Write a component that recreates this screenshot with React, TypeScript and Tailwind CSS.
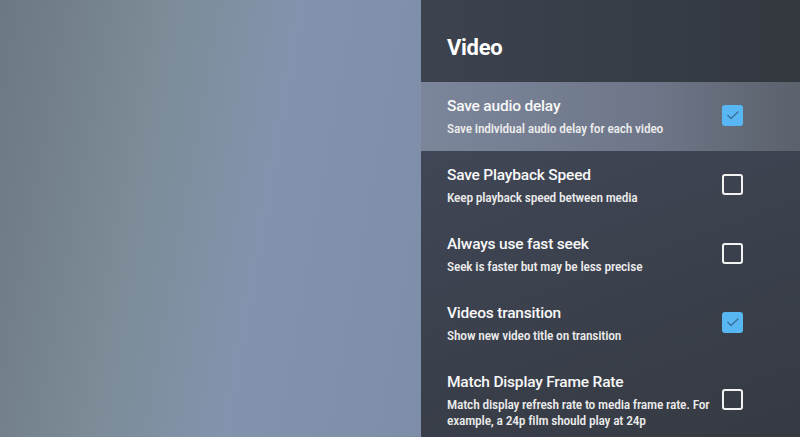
import React from "react";

type Item = { title: string; sub: string[]; checked: boolean; active?: boolean };

const items: Item[] = [
  { title: "Save audio delay", sub: ["Save individual audio delay for each video"], checked: true, active: true },
  { title: "Save Playback Speed", sub: ["Keep playback speed between media"], checked: false },
  { title: "Always use fast seek", sub: ["Seek is faster but may be less precise"], checked: false },
  { title: "Videos transition", sub: ["Show new video title on transition"], checked: true },
  {
    title: "Match Display Frame Rate",
    sub: ["Match display refresh rate to media frame rate. For", "example, a 24p film should play at 24p"],
    checked: false,
  },
];

function Box({ checked }: { checked: boolean }) {
  if (checked) {
    return (
      <div className="w-[21px] h-[21px] rounded-[3px] bg-[#58b6f2] flex items-center justify-center">
        <svg width="14" height="10" viewBox="0 0 14 10" fill="none">
          <path d="M1.5 5 L5 8.5 L12.5 1.5" stroke="#3a6f99" strokeWidth="1.3" />
        </svg>
      </div>
    );
  }
  return <div className="w-[21px] h-[21px] rounded-[3px] border-[2.5px] border-[#f2f2f2]" />;
}

export default function App() {
  return (
    <div
      className="w-[800px] h-[437px] flex overflow-hidden"
      style={{ fontFamily: "Roboto, 'Noto Sans', sans-serif" }}
    >
      <div className="w-[421px] h-full bg-[linear-gradient(100deg,#6c7883_0%,#7d8c98_35%,#8393ad_60%,#7f8ea8_100%)]" />
      <div className="flex-1 h-full flex flex-col bg-[linear-gradient(160deg,#444c5d_0%,#3e4452_40%,#353a42_100%)]">
        <div className="h-[82px] shrink-0 flex items-center pl-[26px] pt-[12px] bg-[linear-gradient(90deg,#3c434f_0%,#33383f_100%)]">
          <h1 className="text-white text-[22px] font-bold tracking-[-0.3px]">Video</h1>
        </div>
        {items.map((it, i) => (
          <div
            key={i}
            className={
              "min-h-[69px] shrink-0 flex items-start pl-[26px] pr-[57px] pt-[14px] pb-[15px] " +
              (it.active ? "bg-[linear-gradient(90deg,#7c869b_0%,#6e7789_60%,#5b626c_100%)]" : "")
            }
          >
            <div className="flex-1 flex flex-col">
              <div className="text-[#f8f8f8] text-[15.5px] font-medium leading-[20px] tracking-[-0.2px]">{it.title}</div>
              <div className="text-[#ececec] text-[13.5px] font-medium leading-[16px] mt-[4px] tracking-[-0.2px] [font-stretch:condensed]">
                {it.sub.map((s, j) => (
                  <div key={j}>{s}</div>
                ))}
              </div>
            </div>
            <div className="self-center -mt-[2px]">
              <Box checked={it.checked} />
            </div>
          </div>
        ))}
      </div>
    </div>
  );
}
